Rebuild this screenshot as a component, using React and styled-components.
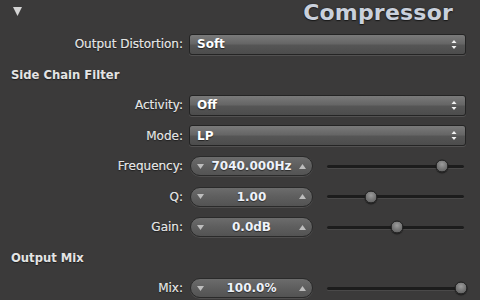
import React from "react";
import styled, { createGlobalStyle } from "styled-components";

const GlobalStyle = createGlobalStyle`
  html, body { margin: 0; padding: 0; background: #3b3a3a; }
  body { font-family: "DejaVu Sans", "Liberation Sans", sans-serif; }
`;

const Panel = styled.div`
  width: 480px;
  height: 300px;
  overflow: hidden;
  background: #3b3a3a;
  color: #dcdcdc;
`;

const Header = styled.div`
  height: 29px;
  display: flex;
  justify-content: space-between;
  align-items: flex-start;
  padding: 0 27px 0 13px;
`;

const Disclosure = styled.svg`
  margin-top: 7px;
  display: block;
`;

const Title = styled.div`
  font-size: 22px;
  font-weight: bold;
  line-height: 26px;
  color: #c9d0dc;
  letter-spacing: 0.2px;
  text-shadow: 0 1px 1px #1a1a1a, 0 0 2px #222;
`;

const Row = styled.div`
  height: 30.5px;
  display: grid;
  grid-template-columns: 183px 1fr;
  column-gap: 6px;
  align-items: center;
  padding-right: 14px;
`;

const Label = styled.div`
  text-align: right;
  font-size: 12px;
  color: #e2e2e2;
  text-shadow: 0 1px 1px #1e1e1e, 0 0 0.4px #e2e2e2;
`;

const Section = styled.div`
  height: 30.5px;
  display: flex;
  align-items: center;
  padding-left: 11px;
  font-size: 11.6px;
  font-weight: bold;
  color: #e4e4e4;
  text-shadow: 0 1px 1px #1e1e1e;
`;

const Select = styled.div`
  height: 19px;
  border: 1px solid #242424;
  border-radius: 3px;
  background: linear-gradient(#7a7a7a 0%, #666 45%, #555 55%, #4c4c4c 100%);
  box-shadow: 0 1px 0 rgba(255, 255, 255, 0.12);
  display: flex;
  align-items: center;
  justify-content: space-between;
  padding: 0 8px 0 7px;
  font-size: 12px;
  font-weight: bold;
  color: #ffffff;
  text-shadow: 0 1px 1px #222;
`;

const PopupArrows = styled.svg`
  display: block;
`;

const ControlLine = styled.div`
  display: flex;
  align-items: center;
  gap: 14px;
  padding-left: 1px;
`;

const Stepper = styled.div`
  width: 123px;
  height: 20px;
  box-sizing: border-box;
  border: 1px solid #2a2a2a;
  border-radius: 10px;
  background: linear-gradient(#6c6c6c 0%, #5e5e5e 50%, #535353 100%);
  box-shadow: 0 1px 0 rgba(255, 255, 255, 0.1);
  display: flex;
  align-items: center;
  justify-content: space-between;
  padding: 0 6px;
  flex-shrink: 0;
`;

const StepValue = styled.div`
  flex: 1;
  text-align: center;
  font-size: 12px;
  font-weight: bold;
  color: #eef2fa;
  text-shadow: 0 1px 1px #2a2a2a;
`;

const Track = styled.div`
  position: relative;
  width: 137px;
  height: 3px;
  border-radius: 2px;
  background: #1c1c1c;
  box-shadow: 0 1px 0 rgba(255, 255, 255, 0.08);
`;

const Thumb = styled.div`
  position: absolute;
  top: 50%;
  width: 13px;
  height: 13px;
  border-radius: 50%;
  transform: translate(-50%, -50%);
  border: 1px solid #1e1e1e;
  box-sizing: border-box;
  background: radial-gradient(circle at 50% 35%, #9c9c9c 0%, #7a7a7a 45%, #555 100%);
  box-shadow: 0 1px 1px rgba(0, 0, 0, 0.5);
`;

const Tri = ({ up }) => (
  <svg width="7" height="5" viewBox="0 0 7 5">
    {up ? (
      <polygon points="0,5 7,5 3.5,0" fill="#bdbdbd" />
    ) : (
      <polygon points="0,0 7,0 3.5,5" fill="#bdbdbd" />
    )}
  </svg>
);

const SelectRow = ({ label, value }) => (
  <Row>
    <Label>{label}</Label>
    <Select>
      <span>{value}</span>
      <PopupArrows width="6" height="11" viewBox="0 0 6 11">
        <polygon points="0.5,4 5.5,4 3,1" fill="#f2f2f2" />
        <polygon points="0.5,7 5.5,7 3,10" fill="#f2f2f2" />
      </PopupArrows>
    </Select>
  </Row>
);

const StepRow = ({ label, value, pos }) => (
  <Row>
    <Label>{label}</Label>
    <ControlLine>
      <Stepper>
        <Tri />
        <StepValue>{value}</StepValue>
        <Tri up />
      </Stepper>
      <Track>
        <Thumb style={{ left: `${pos * 100}%` }} />
      </Track>
    </ControlLine>
  </Row>
);

export default function App() {
  return (
    <>
      <GlobalStyle />
      <Panel>
        <Header>
          <Disclosure width="9" height="9" viewBox="0 0 9 9">
            <polygon points="0,0 9,0 4.5,9" fill="#d4d4d4" />
          </Disclosure>
          <Title>Compressor</Title>
        </Header>
        <SelectRow label="Output Distortion:" value="Soft" />
        <Section>Side Chain Filter</Section>
        <SelectRow label="Activity:" value="Off" />
        <SelectRow label="Mode:" value="LP" />
        <StepRow label="Frequency:" value="7040.000Hz" pos={0.84} />
        <StepRow label="Q:" value="1.00" pos={0.32} />
        <StepRow label="Gain:" value="0.0dB" pos={0.51} />
        <Section>Output Mix</Section>
        <StepRow label="Mix:" value="100.0%" pos={0.98} />
      </Panel>
    </>
  );
}
